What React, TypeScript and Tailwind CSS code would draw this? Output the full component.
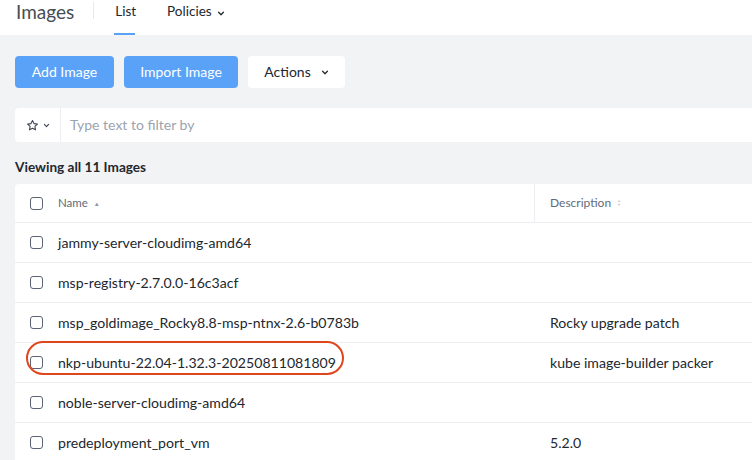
import React from 'react';

const rows = [
  { name: 'jammy-server-cloudimg-amd64', desc: '' },
  { name: 'msp-registry-2.7.0.0-16c3acf', desc: '' },
  { name: 'msp_goldimage_Rocky8.8-msp-ntnx-2.6-b0783b', desc: 'Rocky upgrade patch' },
  { name: 'nkp-ubuntu-22.04-1.32.3-20250811081809', desc: 'kube image-builder packer', marked: true },
  { name: 'noble-server-cloudimg-amd64', desc: '' },
  { name: 'predeployment_port_vm', desc: '5.2.0' },
];

const Chevron = ({ className = '' }: { className?: string }) => (
  <svg viewBox="0 0 10 6" className={className} fill="none" stroke="currentColor" strokeWidth="1.6" strokeLinecap="round" strokeLinejoin="round">
    <path d="M2 1.5l3 3 3-3" />
  </svg>
);

const Checkbox = () => (
  <span className="block w-[13px] h-[13px] rounded-[3px] border-[1.5px] border-[#5b6472] bg-white shrink-0" />
);

export default function App() {
  return (
    <div className="w-[752px] h-[460px] overflow-hidden bg-[#f2f3f5] text-[#22272e] font-['Lato','Liberation_Sans',sans-serif]">
      <div className="h-[35px] bg-white flex items-stretch">
        <div className="pl-4 pr-[19px] flex items-start pt-[1px]">
          <span className="text-[19px] text-[#474c53] leading-[22px]">Images</span>
        </div>
        <div className="w-px h-[17px] bg-[#e6e8eb] mt-[2px]" />
        <div className="ml-[20px] flex flex-col">
          <span className="text-[13.5px] leading-[22px] px-[1px]">List</span>
          <span className="mt-auto h-[2px] w-[21px] bg-[#5aa2f7]" />
        </div>
        <div className="ml-[30px] flex items-start gap-[5px]">
          <span className="text-[13.5px] leading-[22px]">Policies</span>
          <Chevron className="w-[8px] h-[5px] mt-[11px] text-[#22272e]" />
        </div>
      </div>

      <div className="px-[15px]">
        <div className="mt-[21px] flex gap-[10px]">
          <button className="h-8 w-[99px] rounded-[4px] bg-[#5aa2f7] text-white text-sm">Add Image</button>
          <button className="h-8 w-[114px] rounded-[4px] bg-[#5aa2f7] text-white text-sm">Import Image</button>
          <button className="h-8 w-[97px] rounded-[4px] bg-white text-[#22272e] text-sm flex items-center justify-center gap-[10px]">
            Actions
            <Chevron className="w-[8px] h-[5px]" />
          </button>
        </div>

        <div className="mt-5 h-[34px] bg-white rounded-l-[4px] flex items-center mr-[-15px]">
          <div className="w-[46px] h-full flex items-center justify-center gap-[4px] border-r border-[#eceef1]">
            <svg viewBox="0 0 24 24" className="w-[13px] h-[13px]" fill="none" stroke="#3d4450" strokeWidth="2" strokeLinejoin="round">
              <path d="M12 2.8l2.8 5.7 6.3.9-4.6 4.4 1.1 6.2L12 17l-5.6 3 1.1-6.2-4.6-4.4 6.3-.9z" />
            </svg>
            <Chevron className="w-[7px] h-[5px] text-[#3d4450]" />
          </div>
          <span className="pl-[9px] text-sm text-[#9ba3af]">Type text to filter by</span>
        </div>

        <div className="mt-[17px] text-[13.6px] font-bold text-[#22272e] leading-[16px]">Viewing all 11 Images</div>

        <div className="mt-[9px] bg-white rounded-tl-[4px] mr-[-15px]">
          <div className="h-[39px] flex border-b border-[#eceef1]">
            <div className="w-[520px] flex items-center gap-[15px] pl-[15px] border-r border-[#eceef1]">
              <Checkbox />
              <span className="text-[11.5px] text-[#5f6b7a] flex items-center gap-[6px]">
                Name
                <span className="text-[6px] text-[#8a94a3]">▲</span>
              </span>
            </div>
            <div className="flex-1 flex items-center pl-[15px]">
              <span className="text-[12px] text-[#5f6b7a] flex items-center gap-[6px]">
                Description
                <span className="flex flex-col text-[4px] leading-[4px] text-[#c5cad2]">
                  <span>▲</span>
                  <span>▼</span>
                </span>
              </span>
            </div>
          </div>
          {rows.map((r) => (
            <div key={r.name} className="h-10 flex border-b border-[#eceef1]">
              <div className="w-[520px] flex items-center pl-[15px]">
                <div className="relative flex items-center gap-[15px]">
                  {r.marked && (
                    <span className="absolute left-[-4px] top-[-11px] w-[318px] h-[34px] rounded-full border-2 border-[#e0461c]" />
                  )}
                  <Checkbox />
                  <span className="text-[14.1px]">{r.name}</span>
                </div>
              </div>
              <div className="flex-1 flex items-center pl-[15px] text-[14.1px]">{r.desc}</div>
            </div>
          ))}
        </div>
      </div>
    </div>
  );
}
